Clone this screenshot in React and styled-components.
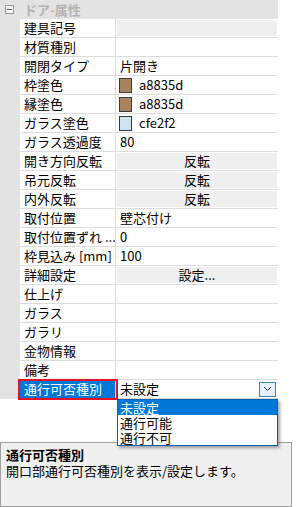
import React from 'react';
import styled, { createGlobalStyle } from 'styled-components';

const GlobalStyle = createGlobalStyle`
  html, body {
    margin: 0;
    padding: 0;
    background: #ffffff;
  }
  body {
    font-family: 'Noto Sans CJK JP', 'Noto Sans', sans-serif;
    font-size: 13px;
    color: #000000;
  }
`;

const Page = styled.div`
  position: relative;
  width: 296px;
  height: 507px;
  display: flex;
  flex-direction: column;
  overflow: hidden;
  background: #ffffff;
`;

const Sheet = styled.div`
  width: 278px;
  height: 442px;
  display: flex;
  flex-direction: column;
`;

const Header = styled.div`
  height: 19px;
  display: flex;
  align-items: center;
  background: #e3e3e3;
  .toggle {
    width: 7px;
    height: 7px;
    margin: 0 10px 0 5px;
    border: 1px solid #9a9a9a;
    background: #f4f4f4;
    display: flex;
    align-items: center;
    justify-content: center;
    &::before {
      content: '';
      width: 5px;
      height: 1px;
      background: #5a5a5a;
    }
  }
  .title {
    font-weight: bold;
    color: #b4b4b4;
    line-height: 19px;
  }
`;

const Row = styled.div`
  height: 19px;
  display: flex;
`;

const Gutter = styled.div`
  width: 20px;
  flex-shrink: 0;
  background: #e3e3e3;
`;

const NameCell = styled.div`
  width: 96px;
  flex-shrink: 0;
  box-sizing: border-box;
  padding-left: 4px;
  line-height: 18px;
  white-space: nowrap;
  overflow: hidden;
  border-right: 1px solid #dcdcdc;
  border-bottom: 1px solid #dcdcdc;
  background: ${(p) => (p.$selected ? '#0078d7' : '#ffffff')};
  color: ${(p) => (p.$selected ? '#ffffff' : '#000000')};
`;

const SelectFrame = styled.div`
  position: absolute;
  left: 18px;
  top: 379px;
  width: 100px;
  height: 21px;
  box-sizing: border-box;
  border: 2px solid #e81123;
  pointer-events: none;
`;

const ValueCell = styled.div`
  flex: 1;
  min-width: 0;
  box-sizing: border-box;
  display: flex;
  align-items: center;
  padding: ${(p) => (p.$boxed ? '1px' : '0 0 0 4px')};
  border-bottom: 1px solid #dcdcdc;
  line-height: 18px;
  white-space: nowrap;
`;

const ReadOnly = styled.div`
  flex: 1;
  align-self: stretch;
  background: #efefef;
`;

const CellButton = styled.div`
  flex: 1;
  align-self: stretch;
  background: #efefef;
  text-align: center;
  line-height: 16px;
`;

const Swatch = styled.span`
  width: 11px;
  height: 13px;
  margin: 0 7px 0 -1px;
  border: 1px solid #3a3a3a;
  background: ${(p) => p.$color};
  flex-shrink: 0;
`;

const Combo = styled.div`
  flex: 1;
  align-self: stretch;
  display: flex;
  align-items: center;
  justify-content: space-between;
  padding-left: 3px;
  background: #ffffff;
  line-height: 16px;
  .arrow {
    width: 17px;
    height: 15px;
    margin-right: 1px;
    box-sizing: border-box;
    border: 1px solid #3c7fb1;
    background: #e5f1fb;
    display: flex;
    align-items: center;
    justify-content: center;
  }
`;

const DropList = styled.div`
  position: absolute;
  left: 117px;
  top: 399px;
  width: 161px;
  box-sizing: border-box;
  border: 1px solid #0063b1;
  background: #ffffff;
  box-shadow: 2px 2px 3px rgba(0, 0, 0, 0.35);
  z-index: 2;
`;

const DropItem = styled.div`
  height: 15px;
  line-height: 15px;
  padding-left: 2px;
  background: ${(p) => (p.$active ? '#0078d7' : 'transparent')};
  color: ${(p) => (p.$active ? '#ffffff' : '#000000')};
`;

const Description = styled.div`
  width: 292px;
  flex: 1;
  box-sizing: border-box;
  border: 1px solid #a0a0a0;
  background: #f0f0f0;
  padding: 4px 5px;
  line-height: 16px;
  .head {
    font-weight: bold;
  }
`;

const rows = [
  { name: '建具記号', kind: 'readonly' },
  { name: '材質種別' },
  { name: '開閉タイプ', value: '片開き' },
  { name: '枠塗色', kind: 'color', color: '#a8835d', value: 'a8835d' },
  { name: '縁塗色', kind: 'color', color: '#a8835d', value: 'a8835d' },
  { name: 'ガラス塗色', kind: 'color', color: '#cfe2f2', value: 'cfe2f2' },
  { name: 'ガラス透過度', value: '80' },
  { name: '開き方向反転', kind: 'button', value: '反転' },
  { name: '吊元反転', kind: 'button', value: '反転' },
  { name: '内外反転', kind: 'button', value: '反転' },
  { name: '取付位置', value: '壁芯付け' },
  { name: '取付位置ずれ ...', value: '0' },
  { name: '枠見込み [mm]', value: '100' },
  { name: '詳細設定', kind: 'button', value: '設定...' },
  { name: '仕上げ' },
  { name: 'ガラス' },
  { name: 'ガラリ' },
  { name: '金物情報' },
  { name: '備考' },
  { name: '通行可否種別', kind: 'combo', value: '未設定', selected: true },
];

const options = ['未設定', '通行可能', '通行不可'];

const renderValue = (row) => {
  switch (row.kind) {
    case 'readonly':
      return <ReadOnly />;
    case 'button':
      return <CellButton>{row.value}</CellButton>;
    case 'color':
      return (
        <>
          <Swatch $color={row.color} />
          {row.value}
        </>
      );
    case 'combo':
      return (
        <Combo>
          {row.value}
          <span className="arrow">
            <svg width="9" height="6" viewBox="0 0 9 6">
              <path d="M1 1 L4.5 4.5 L8 1" fill="none" stroke="#333" strokeWidth="1" />
            </svg>
          </span>
        </Combo>
      );
    default:
      return row.value || '';
  }
};

const App = () => {
  return (
    <>
      <GlobalStyle />
      <Page>
        <Sheet>
          <Header>
            <span className="toggle" />
            <span className="title">ドア-属性</span>
          </Header>
          {rows.map((row) => (
            <Row key={row.name}>
              <Gutter />
              <NameCell $selected={row.selected}>{row.name}</NameCell>
              <ValueCell $boxed={['readonly', 'button', 'combo'].includes(row.kind)}>
                {renderValue(row)}
              </ValueCell>
            </Row>
          ))}
        </Sheet>
        <SelectFrame />
        <DropList>
          {options.map((opt, idx) => (
            <DropItem key={opt} $active={idx === 0}>
              {opt}
            </DropItem>
          ))}
        </DropList>
        <Description>
          <div className="head">通行可否種別</div>
          <div>開口部通行可否種別を表示/設定します。</div>
        </Description>
      </Page>
    </>
  );
};

export default App;
